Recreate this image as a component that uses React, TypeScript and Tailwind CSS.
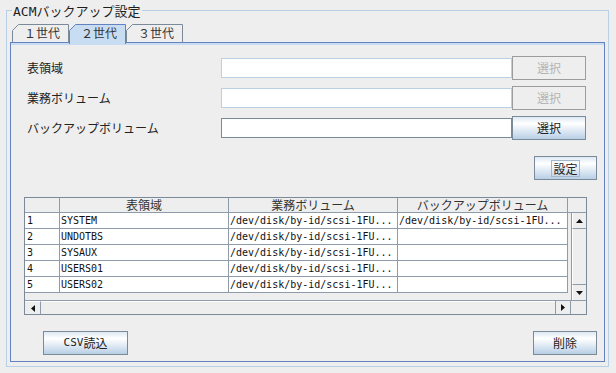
const jp = "font-['Noto_Sans_CJK_JP',sans-serif]";
const mono = "font-['DejaVu_Sans_Mono','Noto_Sans_CJK_JP',monospace]";

const rows = [
  { no: '1', name: 'SYSTEM', vol: '/dev/disk/by-id/scsi-1FU...', bak: '/dev/disk/by-id/scsi-1FU...' },
  { no: '2', name: 'UNDOTBS', vol: '/dev/disk/by-id/scsi-1FU...', bak: '' },
  { no: '3', name: 'SYSAUX', vol: '/dev/disk/by-id/scsi-1FU...', bak: '' },
  { no: '4', name: 'USERS01', vol: '/dev/disk/by-id/scsi-1FU...', bak: '' },
  { no: '5', name: 'USERS02', vol: '/dev/disk/by-id/scsi-1FU...', bak: '' },
]

const okButton =
  'flex items-center justify-center h-[24px] border border-[#7a8a99] bg-[linear-gradient(to_bottom,#dde8f3_0%,#ffffff_30%,#e6eef7_55%,#b8cfe5_100%)] text-[12px] text-[#222]'

function Tab({ label, selected }: { label: string; selected?: boolean }) {
  const h = selected ? 20 : 18
  return (
    <div className={`relative w-[57px] ${selected ? 'z-10 h-[20px] -mb-[2px]' : 'h-[18px]'}`}>
      <svg className="absolute inset-0" width="57" height={h}>
        <path
          d={`M0.5 ${h} V6.5 L6.5 0.5 H56.5 V${h}`}
          fill={selected ? '#c8ddf2' : '#eeeeee'}
          stroke={selected ? '#6382bf' : '#7a8a99'}
        />
      </svg>
      <div className={`relative h-[18px] flex items-center justify-center pl-[3px] text-[12px] text-[#333] ${jp}`}>
        {label}
      </div>
    </div>
  )
}

function Field({ enabled }: { enabled?: boolean }) {
  return (
    <div
      className={`h-[20px] bg-white border ${enabled ? 'border-[#7a8a99]' : 'border-[#b8cfe5]'}`}
    />
  )
}

function PickButton({ enabled }: { enabled?: boolean }) {
  if (enabled) return <div className={`${okButton} ${jp}`}>選択</div>
  return (
    <div
      className={`flex items-center justify-center h-[24px] border border-[#9c9c9c] bg-[#eeeeee] text-[12px] text-[#b4b4b4] ${jp}`}
    >
      選択
    </div>
  )
}

function Tri({ dir }: { dir: 'up' | 'down' | 'left' | 'right' }) {
  const pts = {
    up: '0,4 7,4 3.5,0',
    down: '0,0 7,0 3.5,4',
    left: '4,0 4,7 0,3.5',
    right: '0,0 0,7 4,3.5',
  }[dir]
  const v = dir === 'up' || dir === 'down'
  return (
    <svg width={v ? 7 : 4} height={v ? 4 : 7}>
      <polygon points={pts} fill="#111" />
    </svg>
  )
}

export default function App() {
  return (
    <div className={`w-[616px] h-[373px] bg-[#eeeeee] pt-[10px] pl-[6px] ${jp}`}>
      {/* titled border */}
      <div className="relative w-[603px] h-[357px] border border-[#b8cfe5] pt-[13px] px-[3px]">
        <div className="absolute left-[5px] -top-[9px] px-[1px] bg-[#eeeeee] text-[13px] leading-[18px] text-[#1e1e1e]">
          <span className={`${mono} text-[13px]`}>ACM</span>バックアップ設定
        </div>

        {/* tabs */}
        <div className="flex items-end pl-[2px] h-[18px]">
          <Tab label="１世代" />
          <Tab label="２世代" selected />
          <Tab label="３世代" />
        </div>

        {/* tab content */}
        <div className="w-[595px] h-[320px] border border-[#6382bf] flex flex-col">
          <div className="h-[2px] bg-[#c8ddf2]" />

          <div className="ml-[16px] mt-[11px] grid grid-cols-[194px_291px_74px] gap-y-[6px] items-center text-[12px] text-[#222]">
            <div>表領域</div>
            <Field />
            <PickButton />
            <div>業務ボリューム</div>
            <Field />
            <PickButton />
            <div>バックアップボリューム</div>
            <Field enabled />
            <PickButton enabled />
          </div>

          <div className={`${okButton} self-end mr-[7px] mt-[16px] w-[63px]`}>
            <span className="border border-[#a3b8cc] px-[1px] leading-[15px]">設定</span>
          </div>

          {/* table scroll pane */}
          <div className="ml-[13px] mt-[17px] w-[563px] h-[118px] border border-[#7a8a99] flex flex-col bg-[#eeeeee]">
            <div className="grid grid-cols-[35px_169px_169px_170px_1fr] h-[15px] text-[12px] text-[#333] leading-[14px]">
              <div className="border-r border-b border-[#8d9bab]" />
              <div className="border-r border-b border-[#8d9bab] text-center">表領域</div>
              <div className="border-r border-b border-[#8d9bab] text-center">業務ボリューム</div>
              <div className="border-r border-b border-[#8d9bab] text-center">バックアップボリューム</div>
              <div className="border-b border-[#8d9bab]" />
            </div>

            <div className="flex h-[87px]">
              <div className="w-[546px]">
                {rows.map((r) => (
                  <div
                    key={r.no}
                    className={`grid grid-cols-[35px_169px_169px_170px] w-[543px] h-[16px] bg-white text-[10px] text-[#111] leading-[15px] ${mono}`}
                  >
                    <div className="border-r border-b border-[#8d9bab] pl-[2px]">{r.no}</div>
                    <div className="border-r border-b border-[#8d9bab] pl-[1px] whitespace-nowrap overflow-hidden">{r.name}</div>
                    <div className="border-r border-b border-[#8d9bab] pl-[1px] whitespace-nowrap overflow-hidden">{r.vol}</div>
                    <div className="border-r border-b border-[#8d9bab] pl-[1px] whitespace-nowrap overflow-hidden">{r.bak}</div>
                  </div>
                ))}
              </div>
              {/* vertical scrollbar */}
              <div className="w-[15px] border-l border-[#8d9bab] flex flex-col">
                <div className="h-[16px] border-b border-[#8d9bab] border-l border-l-white flex items-center justify-center">
                  <Tri dir="up" />
                </div>
                <div className="flex-1 border-l border-white" />
                <div className="h-[16px] border-t border-[#8d9bab] border-l border-l-white flex items-center justify-center">
                  <Tri dir="down" />
                </div>
              </div>
            </div>

            {/* horizontal scrollbar */}
            <div className="flex h-[14px] border-t border-[#8d9bab]">
              <div className="w-[16px] border-r border-[#8d9bab] border-t border-t-white flex items-center justify-center">
                <Tri dir="left" />
              </div>
              <div className="w-[514px] border-t border-white" />
              <div className="w-[16px] border-l border-r border-[#8d9bab] flex items-center justify-center">
                <Tri dir="right" />
              </div>
              <div className="flex-1" />
            </div>
          </div>

          <div className="mt-[16px] flex justify-between pl-[32px] pr-[7px]">
            <div className={`${okButton} w-[85px]`}>
              <span className={`${mono} text-[11px]`}>CSV</span>読込
            </div>
            <div className={`${okButton} w-[64px]`}>削除</div>
          </div>
        </div>
      </div>
    </div>
  )
}
